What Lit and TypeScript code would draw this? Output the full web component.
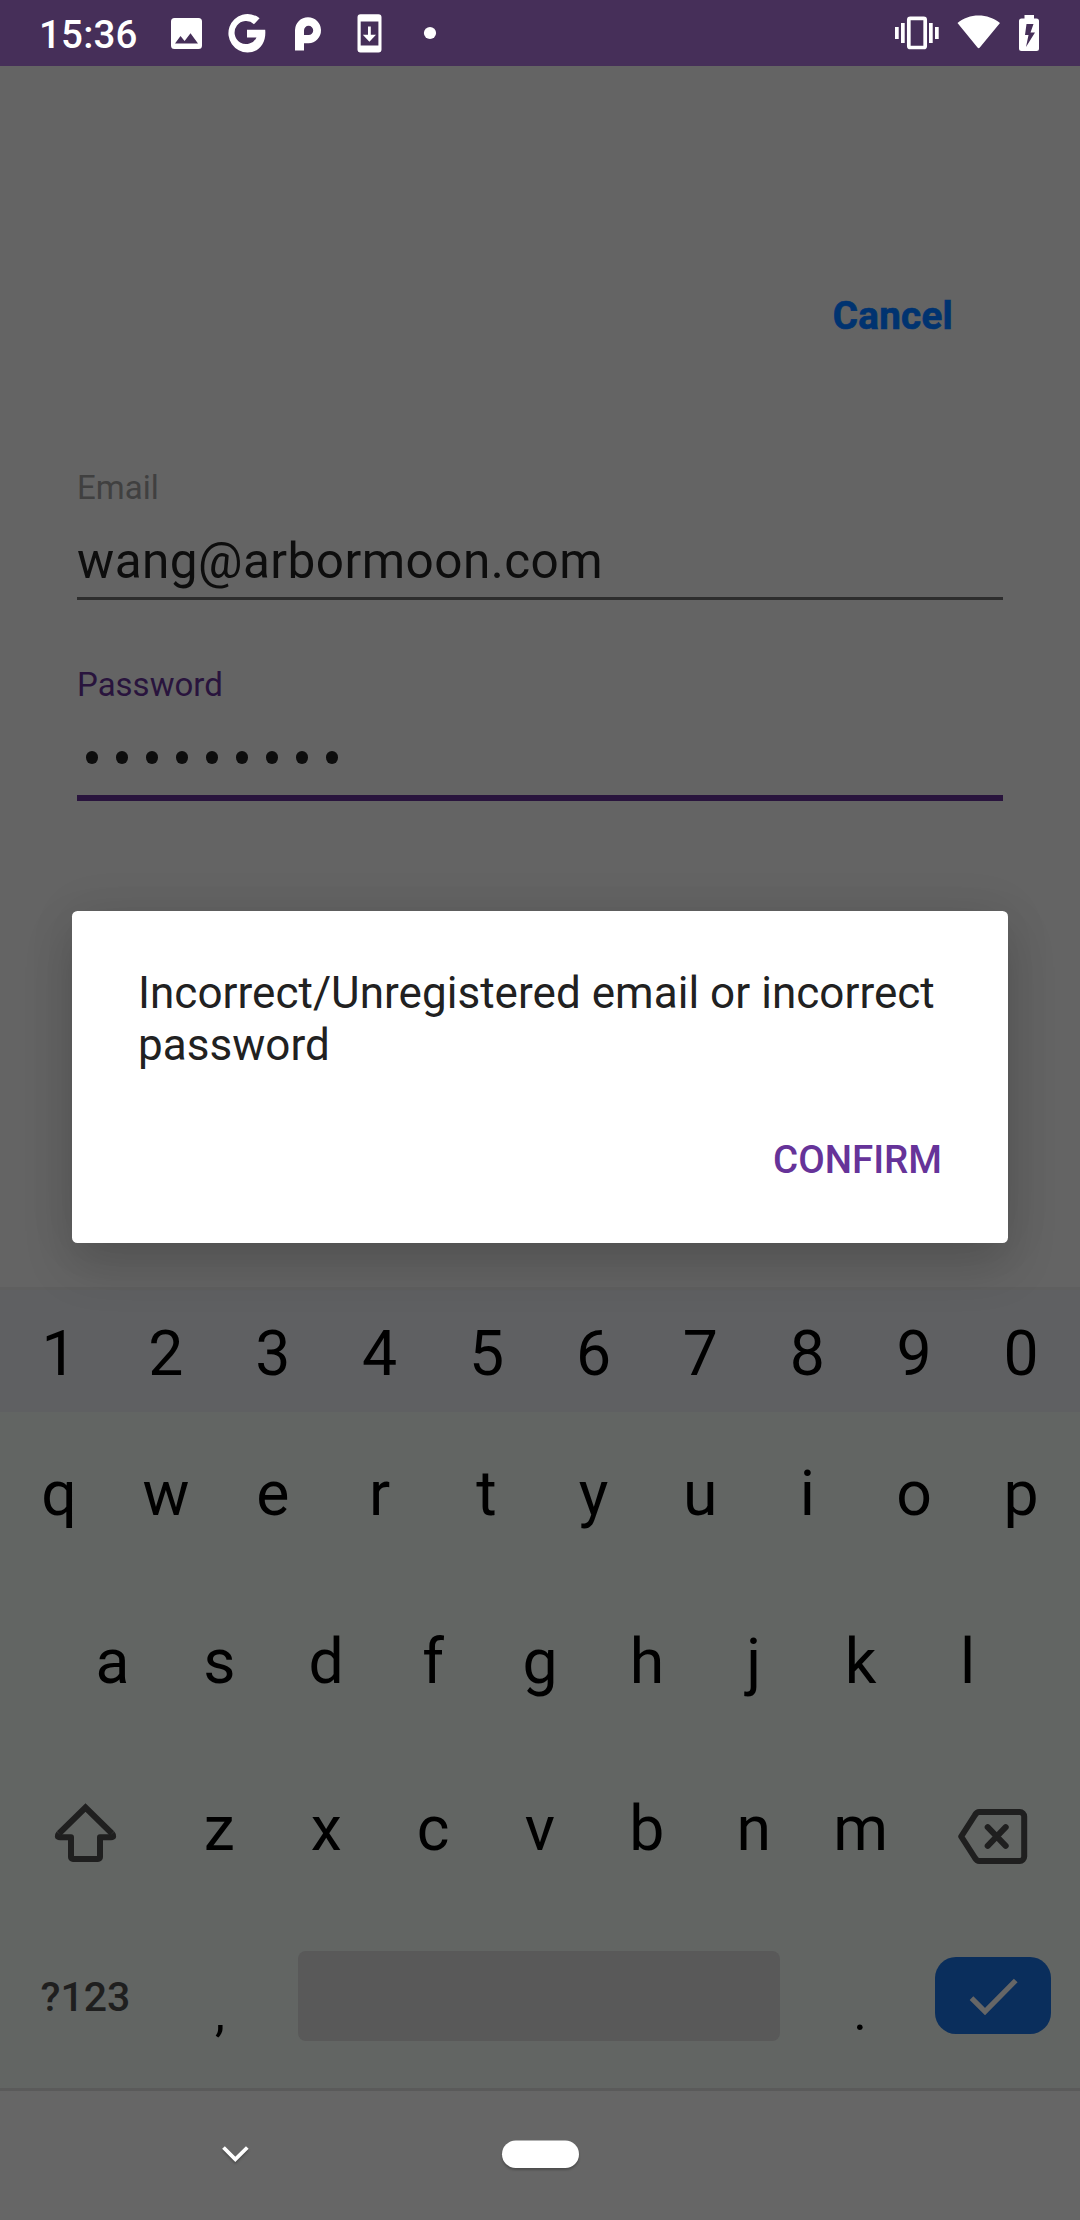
import { LitElement, html, css, svg } from "lit";
import { customElement } from "lit/decorators.js";

const NUMBERS = [..."1234567890"];
const TOP = [..."qwertyuiop"];
const HOME = [..."asdfghjkl"];
const BOTTOM = [..."zxcvbnm"];

@customElement("status-bar")
class StatusBar extends LitElement {
  static styles = css`
    :host { display: flex; align-items: center; height: 66px; background: #462f59; color: #fff; font: 500 38.5px/66px Roboto, sans-serif; box-sizing: border-box; padding: 0 41px 0 39px; }
    .time { width: 127px; padding-top: 3px; height: 66px; box-sizing: border-box; line-height: 64px; letter-spacing: 0.2px; }
    .left { display: block; width: 280px; height: 66px; }
    .gap { flex: 1; }
    .right { display: block; width: 146px; height: 66px; }
  `;
  render() {
    return html`
      <span class="time">15:36</span>
      <svg class="left" viewBox="166 0 280 66" fill="#fff">
        <path fill-rule="evenodd" d="M174.500 18H198.500a3.500 3.500 0 0 1 3.500 3.500V45.500a3.500 3.500 0 0 1-3.500 3.500H174.500a3.500 3.500 0 0 1-3.500-3.500V21.500a3.500 3.500 0 0 1 3.500-3.500ZM175 43.500H198L190.500 33.300 184.600 40.900 180.500 36Z"/>
        <path d="M247 29.800H265.200C266.400 42 260 52.400 247.500 52.400A19.200 19.200 0 1 1 259.600 18.200L254 24.200A11.500 11.500 0 1 0 256.500 37.500H247Z"/>
        <path fill-rule="evenodd" d="M295 50.500V30A13 13 0 1 1 308.500 43.200H304V50.500ZM304 36V30.500A4.600 4.600 0 1 1 308.500 35H304Z"/>
        <path fill-rule="evenodd" d="M360.500 14.200H378.500a3 3 0 0 1 3 3V49.400a3 3 0 0 1-3 3H360.500a3 3 0 0 1-3-3V17.200a3 3 0 0 1 3-3ZM360.700 21.500V45.500H378.400V21.500ZM368 26.500H370.800V34.800H376L369.400 41.800 362.800 34.800H368Z"/>
        <circle cx="430" cy="33" r="6.100"/>
      </svg>
      <span class="gap"></span>
      <svg class="right" viewBox="893 0 146 66" fill="#fff">
        <rect x="895" y="27" width="3.700" height="12"/><rect x="901" y="23" width="3.700" height="20"/>
        <rect x="929" y="23" width="3.700" height="20"/><rect x="935" y="27" width="3.700" height="12"/>
        <rect x="908.800" y="18.300" width="16.400" height="29.200" rx="1.500" fill="none" stroke="#fff" stroke-width="3.700"/>
        <path d="M957.500 23C969 13 988 13 1000 23L979.800 47.500Q978.700 48.900 977.500 47.500Z"/>
        <path fill-rule="evenodd" d="M1024.500 15H1034V18.500H1036.500a2.500 2.500 0 0 1 2.500 2.500V48.500a2.500 2.500 0 0 1-2.500 2.500H1021.500a2.500 2.500 0 0 1-2.500-2.500V21a2.500 2.500 0 0 1 2.500-2.500H1024.500ZM1026.500 24L1025 35H1028.500L1026 47 1035 32.500H1030.500L1033.500 24Z"/>
      </svg>`;
  }
}

@customElement("login-form")
class LoginForm extends LitElement {
  static styles = css`
    :host { display: flex; flex-direction: column; height: 1221px; box-sizing: border-box; padding: 227px 77px 0; background: #646464; font-family: Roboto, sans-serif; }
    .cancel { align-self: flex-end; margin-right: 50px; height: 46px; font-size: 38.500px; line-height: 46px; font-weight: 700; color: #003370; letter-spacing: 0.3px; -webkit-text-stroke: 0.7px #003370; }
    .label { font-size: 33px; line-height: 40px; height: 40px; color: #404040; }
    .email { margin-top: 129px; }
    .value { font-size: 49.500px; line-height: 58px; height: 65px; color: #0d0d0d; margin-top: 24px; letter-spacing: 0.45px; }
    .line { height: 3px; background: #2d2d2d; }
    .purple { color: #29143d; margin-top: 65px; }
    .thick { height: 6px; background: #29143d; }
    .dots { display: flex; gap: 18px; padding: 46px 0 31.500px 9px; height: 12.500px; }
    .dot { width: 12px; height: 12.500px; border-radius: 50%; background: #0d0d0d; }
  `;
  render() {
    return html`
      <div class="cancel">Cancel</div>
      <div class="label email">Email</div>
      <div class="value">wang@arbormoon.com</div>
      <div class="line"></div>
      <div class="label purple">Password</div>
      <div class="dots">${Array.from({ length: 9 }, () => html`<span class="dot"></span>`)}</div>
      <div class="thick"></div>`;
  }
}

@customElement("key-board")
class KeyBoard extends LitElement {
  static styles = css`
    :host { display: flex; flex-direction: column; height: 804px; background: #626563; font-family: Roboto, sans-serif; color: #000; box-sizing: border-box; border-top: 3px solid #5f5f5f; border-bottom: 3px solid #5a5a5a; }
    .row { display: flex; justify-content: center; align-items: flex-start; }
    .key { width: 106.900px; text-align: center; font-size: 62.500px; line-height: 74px; }
    .numbers { height: 122px; background: #5f6062; box-sizing: border-box; padding-top: 27px; }
    .letters { padding-top: 45px; height: 122.500px; }
    .shift { width: 160px; height: 80px; display: block; margin-top: -2px; }
    .last { display: flex; height: 173px; align-items: flex-start; }
    .symbols { width: 165px; padding-left: 6px; box-sizing: border-box; text-align: center; font-weight: 500; font-size: 41px; line-height: 48px; color: #1f1f1f; margin-top: 58px; }
    .comma, .period { text-align: center; font-size: 50px; line-height: 58px; margin-top: 69px; }
    .comma { width: 108px; margin-left: 1px; }
    .space { width: 482px; height: 90px; border-radius: 8px; background: #595959; margin: 36px 0 0 24px; }
    .period { width: 108px; margin-left: 26px; }
    .enter { width: 116px; height: 77px; border-radius: 21px; background: #0a2e5c; margin: 42px 0 0 21px; }
    .enter svg { display: block; }
  `;
  keys(list: string[]) {
    return list.map((k) => html`<span class="key">${k}</span>`);
  }
  render() {
    return html`
      <div class="row numbers">${this.keys(NUMBERS)}</div>
      <div class="row letters">${this.keys(TOP)}</div>
      <div class="row letters">${this.keys(HOME)}</div>
      <div class="row letters">
        <svg class="shift" viewBox="6 1790 160 80" fill="none" stroke="#1f1f1f" stroke-width="6" stroke-linejoin="round">
          <path stroke-linejoin="miter" d="M59 1833.500L85.500 1807.500 112 1833.500"/>
          <path d="M59 1833.500Q56 1837.200 60 1837.200H71V1857a2 2 0 0 0 2 2H98a2 2 0 0 0 2-2V1837.200H111Q115 1837.200 112 1833.500"/>
        </svg>
        ${this.keys(BOTTOM)}
        <svg class="shift" viewBox="914.300 1790 160 80" fill="none" stroke="#1f1f1f" stroke-width="6" stroke-linejoin="round" stroke-linecap="round">
          <path d="M961.500 1836.500L975 1815.500Q977 1812 979.500 1812H1020a4.500 4.500 0 0 1 4.500 4.500V1856.500a4.500 4.500 0 0 1-4.500 4.500H979.500Q977 1861 975 1857.500Z"/>
          <path d="M988 1827.200L1006 1845.800M1006 1827.200L988 1845.800"/>
        </svg>
      </div>
      <div class="last">
        <span class="symbols">?123</span>
        <span class="comma">,</span>
        <span class="space"></span>
        <span class="period">.</span>
        <span class="enter"><svg width="116" height="77" viewBox="935 1957 116 77" fill="none" stroke="#666" stroke-width="5.200"><path d="M971.500 1998.200L985 2011.500 1015.700 1980.500"/></svg></span>
      </div>`;
  }
}

@customElement("alert-dialog")
class AlertDialog extends LitElement {
  static styles = css`
    :host { display: flex; flex-direction: column; box-sizing: border-box; width: 936px; height: 332px; padding: 56px 66px 0; background: #fff; border-radius: 5.500px; box-shadow: 0 22px 50px rgba(0, 0, 0, 0.16), 0 0 50px rgba(0, 0, 0, 0.07); font-family: Roboto, sans-serif; }
    .message { font-size: 44px; line-height: 52px; color: #212121; letter-spacing: 0.04px; }
    .confirm { align-self: flex-end; font-weight: 500; font-size: 38.500px; line-height: 46px; margin-top: 66px; color: #663399; }
  `;
  render() {
    return html`<div class="message">Incorrect/Unregistered email or incorrect password</div><div class="confirm">CONFIRM</div>`;
  }
}

@customElement("app-root")
class AppRoot extends LitElement {
  static styles = css`
    :host { display: block; position: relative; width: 1080px; height: 2220px; overflow: hidden; background: #666; }
    .dialog { position: absolute; left: 72px; top: 911px; }
    .nav { display: block; width: 1080px; height: 129px; filter: drop-shadow(0 2px 1px rgba(0, 0, 0, 0.25)); }
  `;
  render() {
    return html`
      <status-bar></status-bar>
      <login-form></login-form>
      <key-board></key-board>
      <svg class="nav" viewBox="0 2091 1080 129">
        ${svg`<path d="M223.500 2147.500L235.300 2159.300 247.300 2147.500" fill="none" stroke="#fff" stroke-width="3.800"/><rect x="502" y="2140.500" width="77" height="27.500" rx="13.750" fill="#fff"/>`}
      </svg>
      <alert-dialog class="dialog"></alert-dialog>`;
  }
}
